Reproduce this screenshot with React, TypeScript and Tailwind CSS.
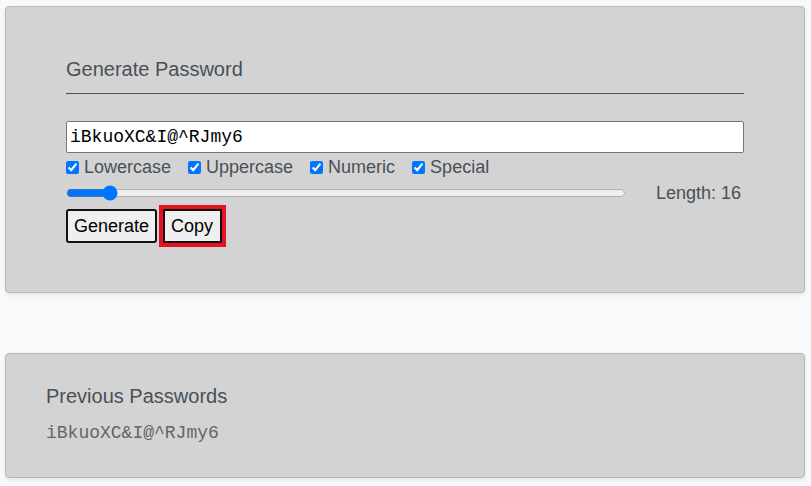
import { useState } from 'react';

const options = ['Lowercase', 'Uppercase', 'Numeric', 'Special'];

export default function App() {
  const [password] = useState('iBkuoXC&I@^RJmy6');
  const [length, setLength] = useState(16);
  const [checked, setChecked] = useState<Record<string, boolean>>({
    Lowercase: true,
    Uppercase: true,
    Numeric: true,
    Special: true,
  });

  return (
    <div className="min-h-screen bg-[#f8f9fb] pt-[6px] pb-2 font-['Liberation_Sans',Arial,sans-serif]">
      <div className="mx-[5px] w-[800px] rounded-[4px] border border-[#b8b8b8] bg-[#d3d3d3] px-[60px] pt-[50px] pb-[49px] shadow-[0_2px_4px_rgba(0,0,0,0.08)]">
        <div className="border-b border-[#495057] pb-[12px]">
          <h2 className="text-[20px] leading-[24px] text-[#495057]">Generate Password</h2>
        </div>

        <input
          type="text"
          readOnly
          value={password}
          className="mt-[27px] block h-[32px] w-full rounded-[2px] border border-[#767676] bg-white px-[3px] font-['Liberation_Mono','Courier_New',monospace] text-[18px] text-black outline-none"
        />

        <div className="mt-[3px] flex h-[22px] items-center gap-[17px] text-[18px] leading-[22px] text-[#495057]">
          {options.map((o) => (
            <label key={o} className="flex items-center gap-[5px]">
              <input
                type="checkbox"
                checked={checked[o]}
                onChange={(e) => setChecked({ ...checked, [o]: e.target.checked })}
                className="m-0 h-[13px] w-[13px] accent-[#0075ff]"
              />
              {o}
            </label>
          ))}
        </div>

        <div className="mt-[2px] flex h-[26px] items-center">
          <input
            type="range"
            min={8}
            max={128}
            value={length}
            onChange={(e) => setLength(Number(e.target.value))}
            className="m-0 w-[560px] accent-[#0075ff]"
          />
          <span className="ml-[30px] text-[18px] text-[#495057]">Length: {length}</span>
        </div>

        <div className="mt-[3px] flex gap-[6px]">
          <button className="h-[34px] rounded-[3px] border-2 border-[#111] bg-[#efefef] px-[6px] text-[18px] text-black">
            Generate
          </button>
          <button className="h-[34px] rounded-none border-2 border-[#111] bg-[#efefef] pl-[6px] pr-[7px] text-[18px] text-black outline-4 outline-[#e81123]">
            Copy
          </button>
        </div>
      </div>

      <div className="mx-[5px] mt-[60px] w-[800px] rounded-[4px] border border-[#b8b8b8] bg-[#d3d3d3] px-[40px] pt-[30px] pb-[33px] shadow-[0_2px_4px_rgba(0,0,0,0.08)]">
        <h2 className="text-[20px] leading-[24px] text-[#495057]">Previous Passwords</h2>
        <div className="mt-[14px] font-['Liberation_Mono','Courier_New',monospace] text-[18px] leading-[22px] text-[#666]">
          {password}
        </div>
      </div>
    </div>
  );
}
